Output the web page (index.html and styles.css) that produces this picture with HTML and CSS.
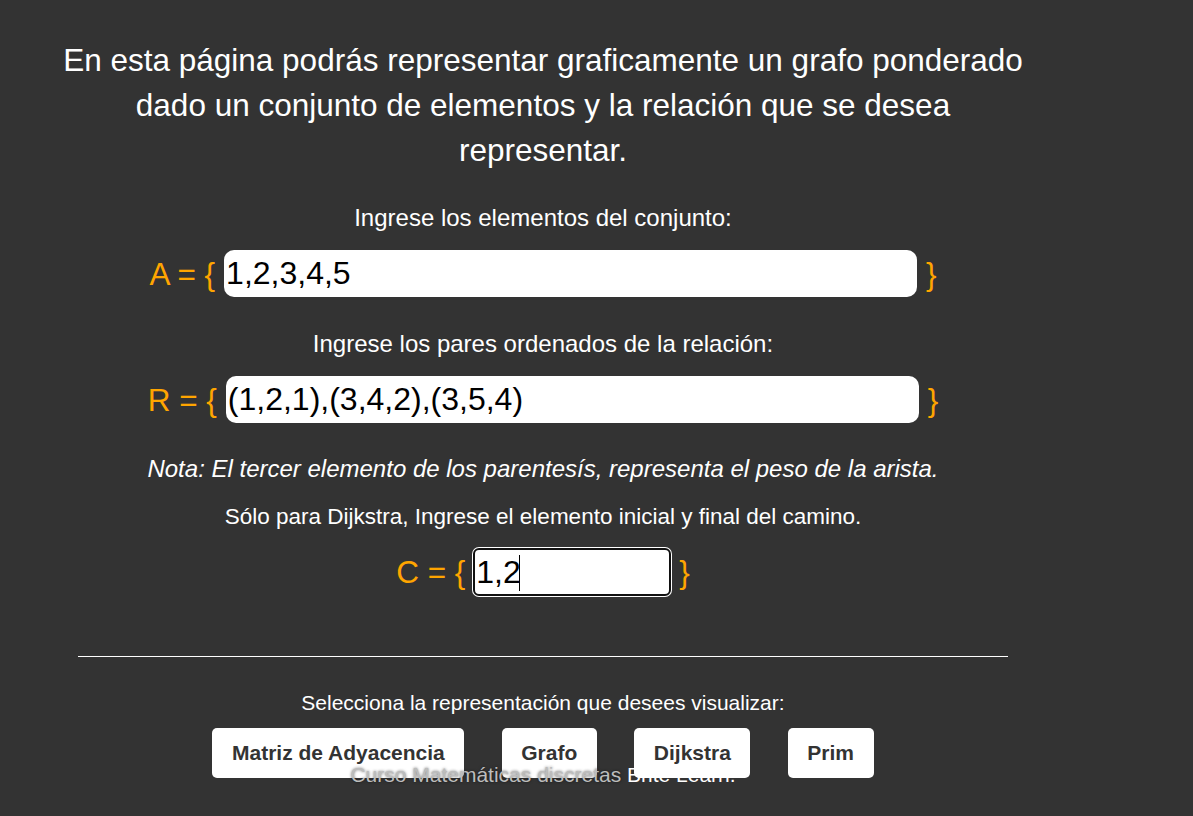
FILE: index.html
```html
<!DOCTYPE html>
<html lang="es">
<head>
<meta charset="utf-8">
<title>Grafo ponderado</title>
<link rel="stylesheet" href="styles.css">
</head>
<body>
<main class="main">
  <h1 class="title">En esta página podrás representar graficamente un grafo ponderado dado un conjunto de elementos y la relación que se desea representar.</h1>

  <p class="label">Ingrese los elementos del conjunto:</p>
  <div class="row">
    <span class="set">A = {</span>
    <input class="field field-wide" type="text" value="1,2,3,4,5">
    <span class="set">}</span>
  </div>

  <p class="label label-r">Ingrese los pares ordenados de la relación:</p>
  <div class="row">
    <span class="set">R = {</span>
    <input class="field field-wide" type="text" value="(1,2,1),(3,4,2),(3,5,4)">
    <span class="set">}</span>
  </div>

  <p class="note">Nota: El tercer elemento de los parentesís, representa el peso de la arista.</p>
  <p class="hint">Sólo para Dijkstra, Ingrese el elemento inicial y final del camino.</p>
  <div class="row row-c">
    <span class="set">C = {</span>
    <span class="field-wrap">
      <input class="field field-small focused" type="text" value="1,2">
      <span class="caret"></span>
    </span>
    <span class="set">}</span>
  </div>

  <hr class="divider">

  <p class="select">Selecciona la representación que desees visualizar:</p>
  <div class="buttons">
    <button class="btn">Matriz de Adyacencia</button>
    <button class="btn">Grafo</button>
    <button class="btn">Dijkstra</button>
    <button class="btn">Prim</button>
  </div>
  <footer class="footer"><span class="muted">Curso Matemáticas discretas</span> Brite Learn.</footer>
</main>
</body>
</html>
```
FILE: styles.css
```css
html, body {
  margin: 0;
  padding: 0;
  background: #333333;
  height: 100%;
  overflow: hidden;
}
body {
  font-family: "Liberation Sans", Arial, sans-serif;
  color: #ffffff;
}
.main {
  position: relative;
  width: 1086px;
  height: 816px;
  box-sizing: border-box;
  padding-top: 38px;
}
.title {
  width: 968px;
  margin: 0 auto;
  text-align: center;
  font-weight: normal;
  font-size: 31.5px;
  line-height: 45px;
}
.label {
  margin: 31px 0 0;
  text-align: center;
  font-size: 24px;
  line-height: 28px;
}
.label-r {
  margin-top: 33px;
}
.row {
  display: flex;
  justify-content: center;
  align-items: center;
  gap: 9px;
  margin-top: 18px;
  height: 47px;
}
.row-c {
  height: 48px;
  gap: 8px;
}
.set {
  color: #ffa500;
  font-size: 31.5px;
  line-height: 36px;
}
.field {
  height: 47px;
  box-sizing: border-box;
  border: none;
  border-radius: 10px;
  background: #ffffff;
  font-family: "Liberation Sans", Arial, sans-serif;
  font-size: 32px;
  color: #000;
  padding: 0 2px;
  outline: none;
  margin: 0;
}
.field-wide {
  width: 693px;
}
.field-wrap {
  position: relative;
  display: block;
  height: 48px;
}
.field-small {
  width: 198px;
  height: 48px;
  display: block;
}
.focused {
  border: 2px solid #111111;
  box-shadow: 0 0 0 1px #ffffff;
  border-radius: 6px;
  padding: 0 1px;
}
.caret {
  position: absolute;
  left: 46px;
  top: 7px;
  width: 1px;
  height: 36px;
  background: #000;
}
.note {
  margin: 32px 0 0;
  text-align: center;
  font-style: italic;
  font-size: 24px;
  line-height: 28px;
}
.hint {
  margin: 21px 0 0;
  text-align: center;
  font-size: 22.5px;
  line-height: 26px;
}
.divider {
  width: 930px;
  margin: 60px auto 0;
  border: none;
  border-top: 1px solid #ffffff;
}
.select {
  margin: 34px 0 0;
  text-align: center;
  font-size: 21px;
  line-height: 24px;
}
.buttons {
  display: flex;
  justify-content: center;
  gap: 37.5px;
  margin-top: 13px;
  position: relative;
  z-index: 0;
}
.btn {
  height: 50px;
  padding: 0 19.5px;
  background: #ffffff;
  border: none;
  border-radius: 5px;
  font-family: "Liberation Sans", Arial, sans-serif;
  font-weight: bold;
  font-size: 21px;
  color: #333333;
}
.footer {
  position: absolute;
  left: 0;
  right: 0;
  top: 763px;
  z-index: 1;
  text-align: center;
  font-size: 21px;
  line-height: 24px;
  color: #ffffff;
}
.muted {
  color: #bdbdbd;
  text-shadow: 0 0 3px rgba(0, 0, 0, 0.6);
}
```
